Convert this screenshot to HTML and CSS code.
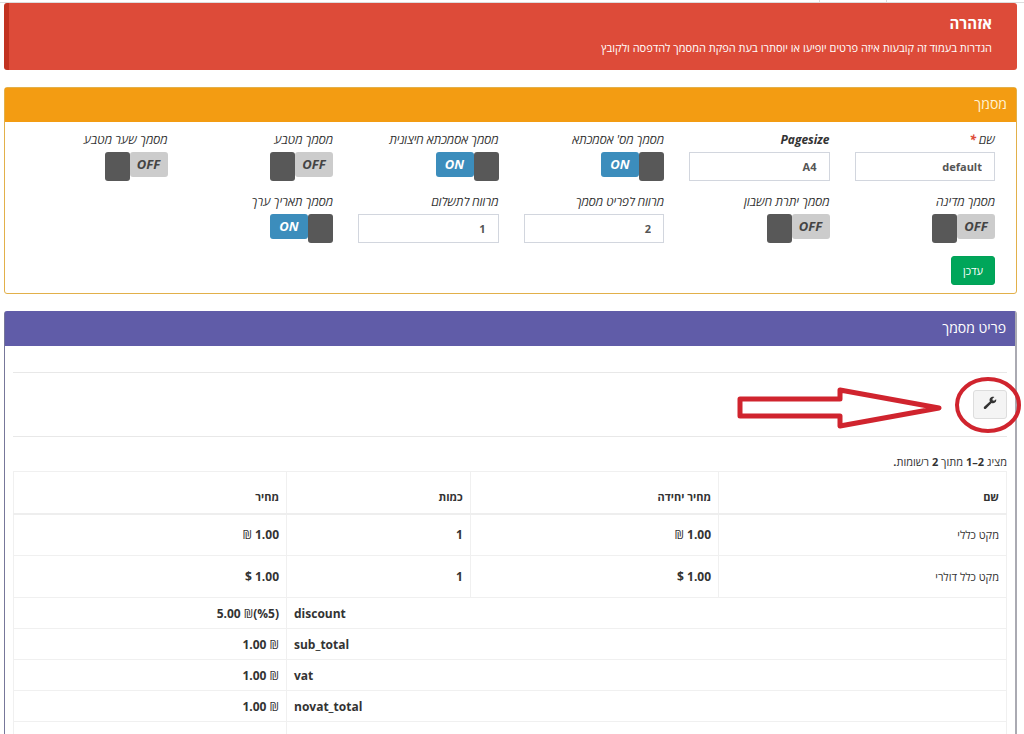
FILE: index.html
```html
<!DOCTYPE html>
<html lang="he" dir="rtl">
<head>
<meta charset="utf-8">
<meta name="viewport" content="width=device-width, initial-scale=1">
<title>מסמך</title>
<link rel="stylesheet" href="styles.css">
</head>
<body>
<div class="topline"><span class="tab-edge"></span></div>
<main class="page">
  <section class="alert" role="alert">
    <h4 class="alert-title">אזהרה</h4>
    <p class="alert-text">הגדרות בעמוד זה קובעות איזה פרטים יופיעו או יוסתרו בעת הפקת המסמך להדפסה ולקובץ</p>
  </section>

  <section class="box box-warning">
    <h3 class="box-title">מסמך</h3>
    <form class="form">
      <div class="fields">
        <div class="field"><label class="label" for="name">שם<span class="required"> *</span></label><input class="text" id="name" type="text" value="default"></div>
        <div class="field"><label class="label label-latin" for="size">Pagesize</label><input class="text" id="size" type="text" value="A4"></div>
        <div class="field"><label class="label" for="ref">מסמך מס' אסמכתא</label><label class="switch"><input class="switch-input" id="ref" type="checkbox" checked><span class="switch-text on">ON</span><span class="switch-text off">OFF</span><span class="knob"></span></label></div>
        <div class="field"><label class="label" for="extref">מסמך אסמכתא חיצונית</label><label class="switch"><input class="switch-input" id="extref" type="checkbox" checked><span class="switch-text on">ON</span><span class="switch-text off">OFF</span><span class="knob"></span></label></div>
        <div class="field"><label class="label" for="currency">מסמך מטבע</label><label class="switch"><input class="switch-input" id="currency" type="checkbox"><span class="switch-text on">ON</span><span class="switch-text off">OFF</span><span class="knob"></span></label></div>
        <div class="field"><label class="label" for="rate">מסמך שער מטבע</label><label class="switch"><input class="switch-input" id="rate" type="checkbox"><span class="switch-text on">ON</span><span class="switch-text off">OFF</span><span class="knob"></span></label></div>
        <div class="field"><label class="label" for="country">מסמך מדינה</label><label class="switch"><input class="switch-input" id="country" type="checkbox"><span class="switch-text on">ON</span><span class="switch-text off">OFF</span><span class="knob"></span></label></div>
        <div class="field"><label class="label" for="balance">מסמך יתרת חשבון</label><label class="switch"><input class="switch-input" id="balance" type="checkbox"><span class="switch-text on">ON</span><span class="switch-text off">OFF</span><span class="knob"></span></label></div>
        <div class="field"><label class="label" for="itemgap">מרווח לפריט מסמך</label><input class="text" id="itemgap" type="text" value="2"></div>
        <div class="field"><label class="label" for="paygap">מרווח לתשלום</label><input class="text" id="paygap" type="text" value="1"></div>
        <div class="field"><label class="label" for="valuedate">מסמך תאריך ערך</label><label class="switch"><input class="switch-input" id="valuedate" type="checkbox" checked><span class="switch-text on">ON</span><span class="switch-text off">OFF</span><span class="knob"></span></label></div>
      </div>
      <button class="submit" type="button">עדכן</button>
    </form>
  </section>

  <section class="box box-items">
    <h3 class="box-title">פריט מסמך</h3>
    <div class="items">
      <div class="toolbar">
        <button class="tool" type="button" aria-label="הגדרות">
          <svg class="wrench" viewBox="0 0 16 16" aria-hidden="true"><path d="M15 3.6 12.6 5.4 10.9 4.9 10.8 3.2 13 1.2C11.1.5 8.9 1 7.9 2.8 7.3 3.9 7.4 5 7.9 6.2L1.3 12.4C.7 13 .7 13.9 1.3 14.5 1.9 15.1 2.8 15.1 3.4 14.5L9.8 8.1C11.3 8.7 12.9 8.4 14 7.2 15 6.1 15.3 4.9 15 3.6Z"/></svg>
        </button>
        <svg class="callout" viewBox="0 0 290 64" aria-hidden="true">
          <path d="M6 25H106V16L205 34 106 52V42H6Z"/>
          <ellipse cx="254" cy="31" rx="31" ry="26"/>
        </svg>
      </div>
      <p class="summary">מציג <b dir="ltr">1–2</b> מתוך <b>2</b> רשומות<b>.</b></p>
      <table class="grid">
        <colgroup><col class="c-name"><col class="c-unit"><col class="c-qty"><col class="c-price"></colgroup>
        <thead><tr><th>שם</th><th>מחיר יחידה</th><th>כמות</th><th>מחיר</th></tr></thead>
        <tbody>
          <tr><td class="name">מקט כללי</td><td>1.00 <span class="sign">₪</span></td><td>1</td><td>1.00 <span class="sign">₪</span></td></tr>
          <tr><td class="name">מקט כלל דולרי</td><td>1.00 $</td><td>1</td><td>1.00 $</td></tr>
        </tbody>
        <tfoot>
          <tr><td colspan="3" class="total">discount</td><td><bdo dir="ltr">5.00 <span class="sign">₪</span>(%5)</bdo></td></tr>
          <tr><td colspan="3" class="total">sub_total</td><td><bdo dir="ltr">1.00 <span class="sign">₪</span></bdo></td></tr>
          <tr><td colspan="3" class="total">vat</td><td><bdo dir="ltr">1.00 <span class="sign">₪</span></bdo></td></tr>
          <tr><td colspan="3" class="total">novat_total</td><td><bdo dir="ltr">1.00 <span class="sign">₪</span></bdo></td></tr>
          <tr><td colspan="3" class="total"></td><td></td></tr>
        </tfoot>
      </table>
    </div>
  </section>
</main>
</body>
</html>
```
FILE: styles.css
```css
* { box-sizing: border-box; }

body {
  margin: 0;
  height: 100vh;
  overflow: hidden;
  background: #fff;
  color: #333;
  font: 12px/17px "Open Sans", "DejaVu Sans", sans-serif;
}

h3, h4, p { margin: 0; }

.topline { height: 3px; padding-right: 137px; border-bottom: 1px solid #ddd; }
.tab-edge { display: block; width: 68px; height: 2px; border: solid #ddd; border-width: 0 1px; }

.page {
  display: flex;
  flex-direction: column;
  gap: 17px;
  padding: 0 7px 0 4px;
}

.alert {
  padding: 10px 25px 14px;
  border-left: 5px solid #c23321;
  border-radius: 3px;
  background: #dd4b39;
  color: #fff;
}
.alert-title { font-size: 15px; line-height: 20px; font-weight: 700; margin-bottom: 6px; }
.alert-text { font-size: 11px; }

.box { border: 1px solid; border-radius: 3px; }
.box-title {
  padding: 6px 9px 8px;
  color: #fff;
  font-size: 14px;
  line-height: 20px;
  font-weight: 400;
}
.box-warning { border-color: #e2b04a; }
.box-warning .box-title { background: #f39c12; color: #fff3d6; }
.box-items { border-color: #605ca8 #aaaab2 #aaaab2 #77779a; border-right-width: 2px; }
.box-items .box-title { background: #605ca8; }

.form { padding: 9px 21px 8px 22px; }
.fields {
  display: grid;
  grid-template-columns: repeat(6, minmax(0, 1fr));
  gap: 10px 25px;
}
.field { display: flex; flex-direction: column; align-items: flex-start; gap: 3px; height: 52px; }
.label { line-height: 18px; font-style: italic; white-space: nowrap; }
.label-latin { font-weight: 700; }
.required { color: #dd4b39; font-weight: 700; }

.text {
  width: 100%;
  height: 29px;
  padding: 0 12px;
  border: 1px solid #d2d6de;
  background: #fff;
  color: #555;
  font: 700 11px "Open Sans", sans-serif;
}

.switch {
  direction: ltr;
  display: flex;
  align-items: flex-start;
  position: relative;
  width: 63px;
  height: 29px;
  font-size: 13px;
  font-style: italic;
  font-weight: 700;
  line-height: 25px;
}
.switch-input { position: absolute; inset: 0; margin: 0; opacity: 0; }
.switch-text { flex: 1; height: 25px; text-align: center; border-radius: 3px; }
.on { display: none; background: #3c8dbc; color: #fff; }
.off { order: 2; background: #ccc; color: #444; }
.knob { width: 25px; height: 29px; border-radius: 3px; background: #585858; }
.switch-input:checked ~ .on { display: block; }
.switch-input:checked ~ .off { display: none; }

.submit {
  display: block;
  margin-top: 11px;
  width: 44px;
  height: 29px;
  padding: 0;
  border: 1px solid #00a157;
  border-radius: 3px;
  background: #00a65a;
  color: #fff;
  font: 11px "Open Sans", sans-serif;
}

.items { padding: 26px 8px 0; }
.toolbar {
  position: relative;
  padding: 17px 0;
  border-top: 1px solid #e8e8e8;
  border-bottom: 1px solid #e8e8e8;
}
.tool {
  display: grid;
  place-items: center;
  width: 34px;
  height: 29px;
  padding: 0 0 3px;
  border: 1px solid #ddd;
  border-radius: 3px;
  background: #f4f4f4;
}
.wrench { width: 14px; height: 14px; fill: #333; }
.callout {
  position: absolute;
  top: 1px;
  right: -17px;
  width: 290px;
  height: 64px;
  fill: none;
  stroke: #d0242e;
  stroke-width: 5;
  stroke-linejoin: round;
  pointer-events: none;
}
.callout ellipse { stroke-width: 4; }

.summary { margin-top: 16px; font-size: 11px; line-height: 18px; }

.grid { width: 100%; table-layout: fixed; border-collapse: collapse; font-weight: 700; }
.c-name { width: 29%; }
.c-unit { width: 25%; }
.c-price { width: 273px; }
.grid th, .grid td { border: 1px solid #f0f0f0; padding: 0 7px; text-align: right; }
.grid thead th { height: 42px; padding-top: 9px; border-bottom: 2px solid #eee; font-size: 11px; }
.grid tbody td { height: 42px; }
.grid tfoot td { height: 31px; }
.grid .name { font-size: 11px; font-weight: 400; }
.sign { font-weight: 400; }
.grid .total { text-align: left; }
```
